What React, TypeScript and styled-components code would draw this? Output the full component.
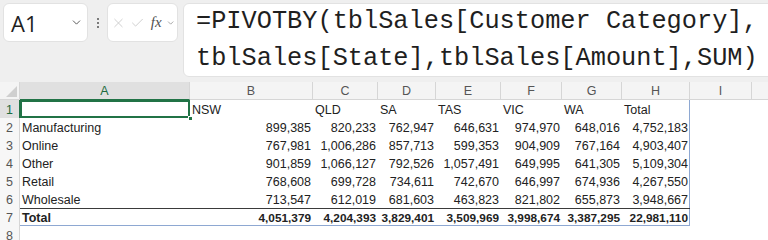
import React from 'react';
import styled, { createGlobalStyle } from 'styled-components';
import { ChevronDown, X, Check } from 'lucide-react';

const Global = createGlobalStyle`
  html, body { margin: 0; padding: 0; background: #ffffff; overflow: hidden; }
  body { width: 768px; height: 240px; font-family: "Liberation Sans", Arial, sans-serif; }
  * { box-sizing: border-box; }
`;

const Page = styled.div`
  width: 768px;
  height: 240px;
  overflow: hidden;
  display: flex;
  flex-direction: column;
`;

const Toolbar = styled.div`
  display: flex;
  align-items: flex-start;
  flex: none;
  height: 82px;
  padding: 3px 0 0 3px;
  background: #efefef;
`;

const NameBox = styled.div`
  width: 85px;
  height: 39px;
  background: #fff;
  border: 1px solid #e2e2e2;
  border-radius: 6px;
  display: flex;
  align-items: center;
  justify-content: space-between;
  padding: 0 4px 0 7px;
  font-family: "Open Sans", "Liberation Sans", sans-serif;
  font-size: 22px;
  color: #1f1f1f;
`;

const Grip = styled.div`
  width: 19px;
  display: flex;
  flex-direction: column;
  align-items: center;
  justify-content: center;
  gap: 2px;
  height: 39px;
  span {
    width: 2px;
    height: 2px;
    border-radius: 1px;
    background: #555;
  }
`;

const FnBox = styled.div`
  width: 71px;
  height: 39px;
  background: #fff;
  border: 1px solid #e2e2e2;
  border-radius: 6px;
  display: flex;
  align-items: center;
  padding: 0 2px 0 3px;
  gap: 4px;
  color: #c4c4c4;
`;

const Fx = styled.span`
  font-family: "Liberation Serif", "Times New Roman", serif;
  font-style: italic;
  font-size: 15px;
  color: #505050;
  margin-left: 2px;
`;

const FormulaBox = styled.div`
  flex: 1;
  margin-left: 5px;
  margin-right: -12px;
  height: 74px;
  background: #fff;
  border: 1px solid #e2e2e2;
  border-radius: 6px;
  padding: 0 0 0 12px;
  font-family: "Liberation Mono", "DejaVu Sans Mono", monospace;
  font-size: 25.3px;
  line-height: 36.5px;
  color: #1f1f1f;
  white-space: pre;
`;

const Sheet = styled.div`
  display: grid;
  grid-template-columns: 20px 170px 123px 65px 58px 65px 61px 60px 68px 62px 62px;
  grid-auto-rows: 18px;
  font-size: 12.5px;
  color: #222;
`;

const ColHead = styled.div<{ $sel?: boolean }>`
  background: ${p => (p.$sel ? '#e0e0e0' : '#f4f4f4')};
  color: ${p => (p.$sel ? '#1e6b40' : '#555')};
  border-right: 1px solid #d6d6d6;
  border-bottom: 1px solid ${p => (p.$sel ? '#217346' : '#d6d6d6')};
  display: flex;
  align-items: center;
  justify-content: center;
  font-size: 12.5px;
`;

const Corner = styled.div`
  background: #f4f4f4;
  border-right: 1px solid #d6d6d6;
  border-bottom: 1px solid #d6d6d6;
  position: relative;
  &::after {
    content: '';
    position: absolute;
    right: 2px;
    bottom: 2px;
    width: 11px;
    height: 11px;
    background: #cfcfcf;
    clip-path: polygon(100% 0, 100% 100%, 0 100%);
  }
`;

const RowHead = styled.div<{ $sel?: boolean }>`
  background: ${p => (p.$sel ? '#e0e0e0' : '#f7f7f7')};
  color: ${p => (p.$sel ? '#1e6b40' : '#555')};
  border-right: 1px solid ${p => (p.$sel ? '#217346' : '#d6d6d6')};
  display: flex;
  align-items: flex-end;
  justify-content: center;
  padding-bottom: 1px;
  font-size: 12.5px;
`;

const Cell = styled.div<{
  $num?: boolean;
  $bold?: boolean;
  $top?: boolean;
  $bottom?: boolean;
  $right?: boolean;
  $active?: boolean;
}>`
  position: relative;
  display: flex;
  align-items: flex-end;
  justify-content: ${p => (p.$num ? 'flex-end' : 'flex-start')};
  padding: 0 2px 1px 2px;
  font-weight: ${p => (p.$bold ? 700 : 400)};
  font-size: ${p => (p.$bold && p.$num ? '11.8px' : '12.5px')};
  white-space: nowrap;
  background: #fff;
  box-shadow: ${p =>
    [
      p.$top ? 'inset 0 1px 0 #3a3a3a' : '',
      p.$bottom ? 'inset 0 -1px 0 #8ea8d2' : '',
      p.$right ? 'inset -1px 0 0 #8ea8d2' : '',
      p.$active ? 'inset 0 0 0 2px #217346' : '',
    ]
      .filter(Boolean)
      .join(', ') || 'none'};
`;

const Handle = styled.span`
  position: absolute;
  right: -3px;
  bottom: -3px;
  width: 5px;
  height: 5px;
  background: #217346;
  border: 1px solid #fff;
  z-index: 2;
`;

const cols = ['A', 'B', 'C', 'D', 'E', 'F', 'G', 'H', 'I', 'J'];

const states = ['NSW', 'QLD', 'SA', 'TAS', 'VIC', 'WA', 'Total'];

const data: [string, string[]][] = [
  ['Manufacturing', ['899,385', '820,233', '762,947', '646,631', '974,970', '648,016', '4,752,183']],
  ['Online', ['767,981', '1,006,286', '857,713', '599,353', '904,909', '767,164', '4,903,407']],
  ['Other', ['901,859', '1,066,127', '792,526', '1,057,491', '649,995', '641,305', '5,109,304']],
  ['Retail', ['768,608', '699,728', '734,611', '742,670', '646,997', '674,936', '4,267,550']],
  ['Wholesale', ['713,547', '612,019', '681,603', '463,823', '821,802', '655,873', '3,948,667']],
  ['Total', ['4,051,379', '4,204,393', '3,829,401', '3,509,969', '3,998,674', '3,387,295', '22,981,110']],
];

export default function App() {
  return (
    <Page>
      <Global />
      <Toolbar>
        <NameBox>
          <span>A1</span>
          <ChevronDown size={13} color="#444" strokeWidth={1.6} />
        </NameBox>
        <Grip>
          <span />
          <span />
          <span />
        </Grip>
        <FnBox>
          <X size={16} strokeWidth={1.3} />
          <Check size={16} strokeWidth={1.3} />
          <Fx>fx</Fx>
          <ChevronDown size={10} color="#777" strokeWidth={1.6} />
        </FnBox>
        <FormulaBox>
          {'=PIVOTBY(tblSales[Customer Category],\ntblSales[State],tblSales[Amount],SUM)'}
        </FormulaBox>
      </Toolbar>
      <Sheet>
        <Corner />
        {cols.map(c => (
          <ColHead key={c} $sel={c === 'A'}>
            {c}
          </ColHead>
        ))}

        <RowHead $sel>1</RowHead>
        <Cell $active>
          <Handle />
        </Cell>
        {states.map((s, i) => (
          <Cell key={s} $right={i === 6}>
            {s}
          </Cell>
        ))}
        <Cell />
        <Cell />

        {data.map(([label, vals], r) => {
          const total = r === data.length - 1;
          return (
            <React.Fragment key={label}>
              <RowHead>{r + 2}</RowHead>
              <Cell $bold={total} $top={total} $bottom={total}>
                {label}
              </Cell>
              {vals.map((v, i) => (
                <Cell
                  key={i}
                  $num
                  $bold={total}
                  $top={total}
                  $bottom={total}
                  $right={i === vals.length - 1}
                >
                  {v}
                </Cell>
              ))}
              <Cell />
              <Cell />
            </React.Fragment>
          );
        })}

        <RowHead>8</RowHead>
        {cols.map(c => (
          <Cell key={c} />
        ))}
      </Sheet>
    </Page>
  );
}
